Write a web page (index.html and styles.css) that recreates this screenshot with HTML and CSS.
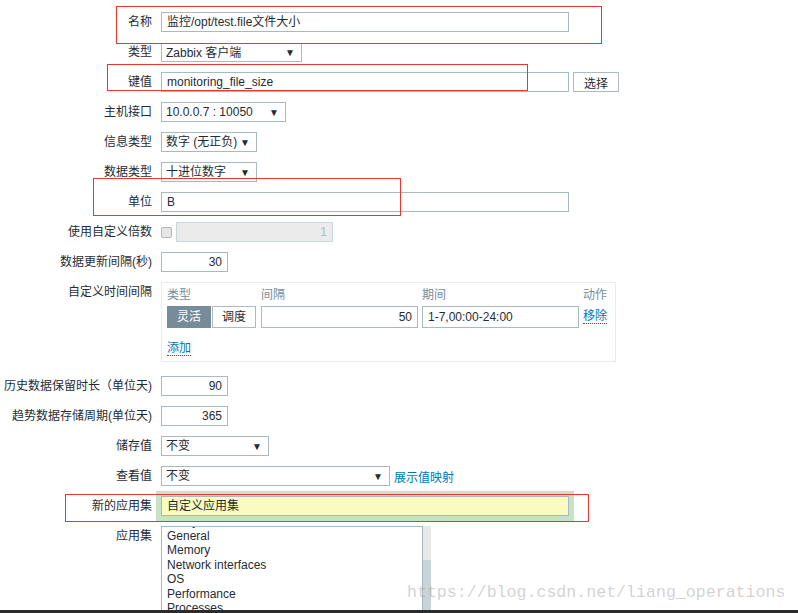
FILE: index.html
```html
<!DOCTYPE html>
<html lang="zh-CN">
<head>
  <meta charset="UTF-8">
  <title>监控项</title>
  <link rel="stylesheet" href="styles.css">
</head>
<body>

  <div class="page">
    <form class="item-form">
      <div class="row first">
        <label>名称</label>
        <div class="input wide">监控/opt/test.file文件大小</div>
      </div>

      <div class="row row-type">
        <label>类型</label>
        <div class="select w-type short-h"><span>Zabbix 客户端</span><span class="arrow">▼</span></div>
      </div>

      <div class="row">
        <label>键值</label>
        <div class="inline">
          <div class="input wide">monitoring_file_size</div>
          <button type="button" class="btn">选择</button>
        </div>
      </div>

      <div class="row">
        <label>主机接口</label>
        <div class="select w-iface"><span>10.0.0.7 : 10050</span><span class="arrow">▼</span></div>
      </div>

      <div class="row">
        <label>信息类型</label>
        <div class="select w-small"><span>数字 (无正负)</span><span class="arrow">▼</span></div>
      </div>

      <div class="row">
        <label>数据类型</label>
        <div class="select w-small"><span>十进位数字</span><span class="arrow">▼</span></div>
      </div>

      <div class="row">
        <label>单位</label>
        <div class="input wide">B</div>
      </div>

      <div class="row">
        <label>使用自定义倍数</label>
        <div class="inline">
          <span class="checkbox"></span>
          <div class="input disabled num">1</div>
        </div>
      </div>

      <div class="row">
        <label>数据更新间隔(秒)</label>
        <div class="input short num">30</div>
      </div>

      <div class="row row-interval">
        <label>自定义时间间隔</label>
        <div class="interval-box">
          <div class="interval-grid">
            <span class="head">类型</span>
            <span class="head">间隔</span>
            <span class="head">期间</span>
            <span class="head">动作</span>

            <div class="seg">
              <span class="seg-btn on">灵活</span>
              <span class="seg-btn">调度</span>
            </div>
            <div class="input tall num">50</div>
            <div class="input tall">1-7,00:00-24:00</div>
            <a class="link dotted">移除</a>
          </div>
          <a class="link dotted add">添加</a>
        </div>
      </div>

      <div class="row">
        <label>历史数据保留时长（单位天)</label>
        <div class="input short num">90</div>
      </div>

      <div class="row">
        <label>趋势数据存储周期(单位天)</label>
        <div class="input short num">365</div>
      </div>

      <div class="row">
        <label>储存值</label>
        <div class="select w-store"><span>不变</span><span class="arrow">▼</span></div>
      </div>

      <div class="row">
        <label>查看值</label>
        <div class="inline">
          <div class="select w-view"><span>不变</span><span class="arrow">▼</span></div>
          <a class="link">展示值映射</a>
        </div>
      </div>

      <div class="row">
        <label>新的应用集</label>
        <div class="highlight">
          <div class="input wide new-app">自定义应用集</div>
        </div>
      </div>

      <div class="row">
        <label>应用集</label>
        <div class="listbox">
          <div class="list">
            <ul>
              <li>Filesystems</li>
              <li>General</li>
              <li>Memory</li>
              <li>Network interfaces</li>
              <li>OS</li>
              <li>Performance</li>
              <li>Processes</li>
              <li>Security</li>
            </ul>
          </div>
          <div class="scrollbar"><div class="thumb"></div></div>
        </div>
      </div>
    </form>

    <!-- red annotation boxes drawn over the screenshot -->
    <div class="mark mark-name"></div>
    <div class="mark mark-key"></div>
    <div class="mark mark-unit"></div>
    <div class="mark mark-app"></div>

    <div class="watermark">https://blog.csdn.net/liang_operations</div>
    <div class="taskbar"></div>
  </div>

</body>
</html>
```

FILE: styles.css
```css
body {
  margin: 0;
  padding: 0;
  background-color: #fff;
  font-family: "Liberation Sans", "Noto Sans CJK SC", sans-serif;
  font-size: 12px;
  color: #1f2c33;
}

.page {
  position: relative;
  height: 613px;
  overflow: hidden;
}

.item-form {
  padding-top: 12px;
}

.row {
  display: grid;
  grid-template-columns: 152px auto;
  column-gap: 9px;
  align-items: start;
  margin-bottom: 10px;
}

.row.first {
  margin-bottom: 11px;
}

.row label {
  text-align: right;
  line-height: 20px;
  white-space: nowrap;
}

.row.row-type label {
  line-height: 19px;
}

.inline {
  display: flex;
  align-items: center;
  gap: 4px;
}

.input {
  box-sizing: border-box;
  height: 20px;
  line-height: 19px;
  padding: 0 5px;
  border: 1px solid #a9b9c1;
  background-color: #fff;
  white-space: nowrap;
  overflow: hidden;
}

.input.wide {
  width: 408px;
}

.input.short {
  width: 67px;
}

.input.num {
  text-align: right;
}

.input.tall {
  height: 22px;
  line-height: 21px;
  width: 157px;
}

.input.disabled {
  width: 157px;
  background-color: #ebebeb;
  border-color: #ccd5da;
  color: #a7c0cf;
}

.checkbox {
  box-sizing: border-box;
  width: 11px;
  height: 11px;
  border: 1px solid #b5b5b5;
  border-radius: 2px;
  background-color: #e6e6e6;
}

.select {
  box-sizing: border-box;
  height: 20px;
  line-height: 19px;
  padding: 0 6px 0 4px;
  border: 1px solid #a9b9c1;
  display: flex;
  justify-content: space-between;
  white-space: nowrap;
}

.select.short-h {
  height: 19px;
  line-height: 18px;
}

.select .arrow {
  font-size: 10px;
  color: #1f2c33;
}

.w-type { width: 141px; }
.w-iface { width: 125px; }
.w-small { width: 96px; }
.w-store { width: 108px; }
.w-view { width: 229px; }

.btn {
  box-sizing: border-box;
  height: 20px;
  width: 46px;
  padding: 0;
  border: 1px solid #acbbc2;
  background-color: #fff;
  font-family: inherit;
  font-size: 12px;
  color: #1f2c33;
}

.link {
  color: #0275b8;
  text-decoration: none;
}

.link.dotted {
  border-bottom: 1px dotted #0275b8;
  line-height: 14px;
}

/* custom intervals block */
.row-interval {
  margin-bottom: 14px;
}

.interval-box {
  box-sizing: border-box;
  width: 455px;
  border: 1px solid #ebebeb;
  padding: 2px 5px 5px;
}

.interval-grid {
  display: grid;
  grid-template-columns: 89px 156px 156px auto;
  column-gap: 5px;
  align-items: center;
}

.interval-grid .head {
  line-height: 20px;
  color: #768d99;
}

.interval-grid .input.tall {
  width: 157px;
  margin-top: 1px;
}

.interval-grid .link {
  justify-self: start;
}

.seg {
  display: flex;
  gap: 1px;
  margin-top: 1px;
}

.seg-btn {
  box-sizing: border-box;
  width: 44px;
  height: 22px;
  line-height: 21px;
  text-align: center;
  border: 1px solid #acbbc2;
  background-color: #fff;
}

.seg-btn.on {
  background-color: #768d99;
  border-color: #768d99;
  color: #fff;
}

.add {
  display: inline-block;
  margin-top: 13px;
}

/* new application */
.highlight {
  margin: -5px;
  padding: 5px;
  width: 408px;
  background-color: #c8e2c6;
}

.input.new-app {
  background-color: #f9fbc0;
}

/* application list */
.listbox {
  display: flex;
  height: 100px;
}

.list {
  box-sizing: border-box;
  width: 262px;
  border: 1px solid #a9b9c1;
  overflow: hidden;
}

.list ul {
  list-style: none;
  margin: -13px 0 0;
  padding: 0;
}

.list li {
  line-height: 14.5px;
  padding-left: 5px;
}

.scrollbar {
  width: 8px;
  background-color: #e8e8e8;
  position: relative;
}

.thumb {
  position: absolute;
  top: 34px;
  left: 0;
  right: 0;
  bottom: 0;
  background-color: #c9d4da;
}

/* annotations */
.mark {
  position: absolute;
  border: 1px solid #ee3333;
  box-sizing: border-box;
}

.mark-name { left: 116px; top: 6px; width: 486px; height: 38px; }
.mark-key { left: 107px; top: 64px; width: 421px; height: 27px; }
.mark-unit { left: 93px; top: 178px; width: 308px; height: 38px; }
.mark-app { left: 65px; top: 494px; width: 524px; height: 28px; }

.watermark {
  position: absolute;
  left: 407px;
  top: 583px;
  font-family: "Liberation Mono", monospace;
  font-size: 16.6px;
  color: rgba(140, 140, 140, 0.4);
  white-space: nowrap;
}

.taskbar {
  position: absolute;
  left: 0;
  right: 0;
  bottom: 0;
  height: 3px;
  background-color: #2b2b2b;
}
```
